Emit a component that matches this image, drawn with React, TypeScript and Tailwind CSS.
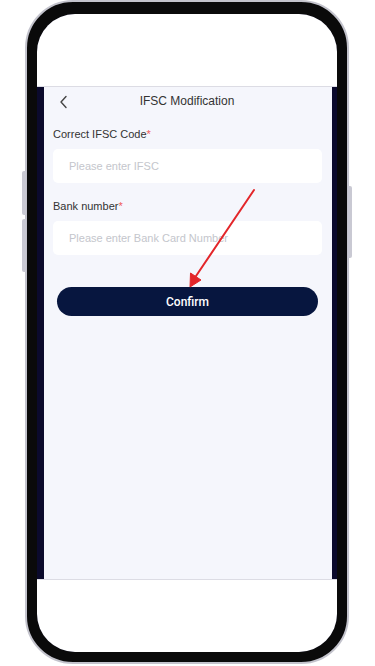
import React from "react";

// Phone mockup showing the IFSC modification form, with a red pointer arrow
// drawn over the screen (a screen-recording annotation).

function Field({ label, placeholder }: { label: string; placeholder: string }) {
  return (
    <div className="flex flex-col">
      <div className="text-[11px] leading-[14px] text-[#333]">
        {label}
        <span className="text-[#f05a5a]">*</span>
      </div>
      <div className="mt-[8px] flex h-[34px] items-center rounded-[5px] bg-white pl-[16px] text-[11px] text-[#c4c6cc]">
        {placeholder}
      </div>
    </div>
  );
}

export default function App() {
  return (
    <div
      className="relative h-[666px] w-[375px] overflow-hidden bg-white"
      style={{ fontFamily: '"Liberation Sans", Arial, sans-serif' }}
    >
      {/* side buttons */}
      <div className="absolute left-[22px] top-[171px] h-[44px] w-[4px] rounded-l-[2px] bg-[#c9c9d3]" />
      <div className="absolute left-[22px] top-[219px] h-[53px] w-[4px] rounded-l-[2px] bg-[#c9c9d3]" />
      <div className="absolute left-[348px] top-[186px] h-[72px] w-[4px] rounded-r-[2px] bg-[#c9c9d3]" />

      <div className="ml-[25px] h-[664px] w-[324px] rounded-[48px] border-2 border-[#c3c3cc] bg-[#0a0a0a] px-[10px] pb-[10px] pt-[12px]">
        <div className="flex h-full flex-col overflow-hidden rounded-[38px] bg-[#0b0a2c]">
          <div className="h-[73px] shrink-0 border-b border-[#dcdce4] bg-white" />
          <div className="flex flex-1 pl-[7px] pr-[5px]">
            <div className="flex flex-1 flex-col bg-[#f5f6fc]">
              <div className="relative flex h-[28px] items-center justify-center">
                <svg
                  className="absolute left-[14px] top-[8px]"
                  width="12"
                  height="14"
                  viewBox="0 0 12 14"
                  fill="none"
                  stroke="#444"
                  strokeWidth="1.4"
                  strokeLinecap="round"
                  strokeLinejoin="round"
                >
                  <path d="M8 1.5 L3 7 L8 12.5" />
                </svg>
                <span className="pr-[2px] text-[12px] text-[#333]">IFSC Modification</span>
              </div>
              <div className="flex flex-col gap-[16px] pl-[9px] pr-[10px] pt-[12px]">
                <Field label="Correct IFSC Code" placeholder="Please enter IFSC" />
                <Field label="Bank number" placeholder="Please enter Bank Card Number" />
              </div>
              <div className="mt-[32px] pl-[13px] pr-[14px]">
                <div
                  className="flex h-[29px] items-center justify-center rounded-full bg-[#07163f] text-[12px] font-medium text-white"
                  style={{ fontFamily: "Roboto, Arial, sans-serif" }}
                >
                  Confirm
                </div>
              </div>
            </div>
          </div>
          <div className="h-[73px] shrink-0 border-t border-[#dcdce4] bg-white" />
        </div>
      </div>

      {/* annotation arrow */}
      <svg className="pointer-events-none absolute left-0 top-0" width="375" height="666">
        <line x1="254" y1="190" x2="194" y2="279" stroke="#e3262a" strokeWidth="2" strokeLinecap="round" />
        <path d="M190 287 L190.5 273 L201 280 Z" fill="#e3262a" stroke="#e3262a" strokeWidth="1" strokeLinejoin="round" />
      </svg>
    </div>
  );
}
